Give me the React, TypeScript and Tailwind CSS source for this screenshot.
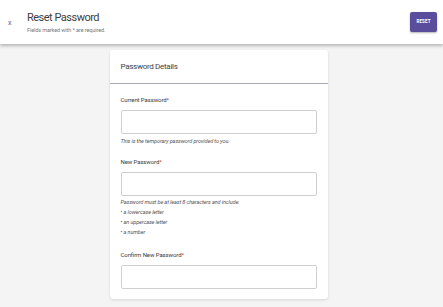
import React from "react";

const font = { fontFamily: "Roboto, 'Liberation Sans', sans-serif" };

function Field({ label, children }: { label: string; children?: React.ReactNode }) {
  return (
    <div className="flex flex-col">
      <div className="text-[6px] leading-[8px] text-[#3a3a3a] tracking-[-0.1px]">
        {label}
        <span className="text-[#d32f2f]">*</span>
      </div>
      <div className="mt-[6px] h-[24px] w-full rounded-[2px] border border-[#cfcfcf] bg-white" />
      {children}
    </div>
  );
}

export default function App() {
  return (
    <div className="w-[443px] h-[307px] bg-[#f4f4f5] overflow-hidden flex flex-col" style={font}>
      <div className="h-[44px] shrink-0 bg-white shadow-[0_2px_3px_rgba(0,0,0,0.25)] flex items-center pl-[8px] pr-[6px] relative z-10">
        <span className="text-[7px] text-[#5f5b8f] w-[19px] mt-[2px]">x</span>
        <div className="flex flex-col -mt-[1px]">
          <div className="text-[11px] leading-[13px] text-[#3d3d3d] tracking-[-0.5px]">Reset Password</div>
          <div className="mt-[3px] text-[5.5px] leading-[6px] text-[#777] tracking-[-0.1px]">Fields marked with * are required.</div>
        </div>
        <button className="ml-auto h-[20px] w-[27px] rounded-[2px] bg-[#594d9c] text-white text-[4.5px] font-bold tracking-[0.1px] shadow-[0_1px_2px_rgba(0,0,0,0.3)]">
          RESET
        </button>
      </div>
      <div className="flex justify-center pt-[6px]">
        <div className="w-[218px] bg-white rounded-[3px] shadow-[0_1px_3px_rgba(0,0,0,0.12)] pb-[10px] mr-[6px]">
          <div className="h-[34px] flex items-center px-[11px] border-b border-[#a9a7b3] text-[8px] text-[#444] tracking-[-0.3px]">
            Password Details
          </div>
          <div className="px-[11px] pt-[12px] flex flex-col gap-[13.5px]">
            <Field label="Current Password">
              <div className="mt-[3.5px] text-[5.5px] leading-[7px] italic text-[#555] tracking-[-0.1px]">This is the temporary password provided to you.</div>
            </Field>
            <Field label="New Password">
              <div className="mt-[2.5px] text-[5.5px] italic text-[#555] flex flex-col tracking-[-0.1px]">
                <span className="leading-[7px]">Password must be at least 8 characters and include:</span>
                <span className="mt-[1.5px] leading-[10px]"><span className="not-italic">&#8226;</span> a lowercase letter</span>
                <span className="leading-[10px]"><span className="not-italic">&#8226;</span> an uppercase letter</span>
                <span className="leading-[10px]"><span className="not-italic">&#8226;</span> a number</span>
              </div>
            </Field>
            <Field label="Confirm New Password" />
          </div>
        </div>
      </div>
    </div>
  );
}
